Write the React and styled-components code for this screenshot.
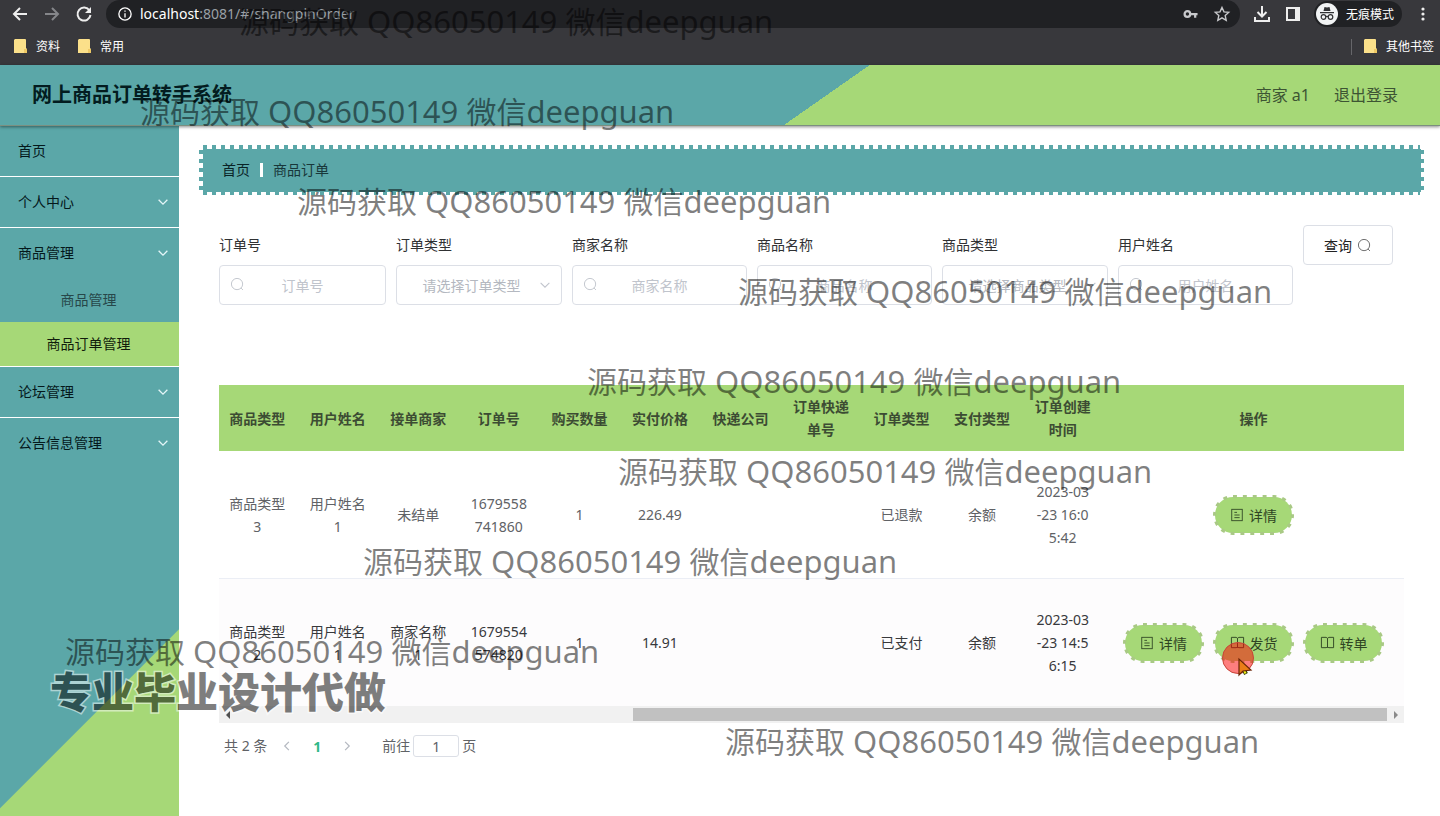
import React from "react";
import styled, { createGlobalStyle } from "styled-components";

const TEAL = "#5ba7a8";
const GREEN = "#a6d877";

const Global = createGlobalStyle`
  * { box-sizing: border-box; }
  body { margin: 0; background: #fff; }
  body, button, input, select { font-family: "Noto Sans", "Noto Sans CJK SC", sans-serif; font-size: 14px; }
  button { cursor: pointer; }
`;

const Page = styled.div`
  position: relative;
  min-height: 100vh;
  display: flex;
  flex-direction: column;
  overflow: hidden;
  line-height: 20px;
`;

/* ---------- browser frame ---------- */
const Browser = styled.div`
  background: #38383c;
  color: #fff;
  height: 65px;
  font-size: 12px;
`;
const Toolbar = styled.div`
  display: flex;
  align-items: center;
  height: 28px;
  padding: 0 8px 0 10px;
  gap: 12px;
`;
const IconButton = styled.button`
  display: flex;
  padding: 0;
  border: 0;
  background: none;
  color: ${(p) => p.$color || "#eee"};
`;
const Address = styled.div`
  flex: 1;
  display: flex;
  align-items: center;
  gap: 8px;
  height: 28px;
  padding: 0 8px 0 12px;
  border-radius: 14px;
  background: #202124;
`;
const Url = styled.span`
  flex: 1;
  font-size: 14px;
  color: #9aa0a6;
  b { font-weight: 400; color: #fff; }
`;
const AddressActions = styled.div`
  display: flex;
  align-items: center;
  gap: 14px;
`;
const Incognito = styled.button`
  display: flex;
  align-items: center;
  gap: 8px;
  height: 26px;
  padding: 0 8px 0 2px;
  border: 0;
  border-radius: 13px;
  background: #202124;
  color: #fff;
  font-size: 12px;
`;
const Bookmarks = styled.div`
  display: flex;
  align-items: center;
  height: 37px;
  padding: 0 6px 0 14px;
  gap: 18px;
`;
const Bookmark = styled.a`
  display: flex;
  align-items: center;
  gap: 9px;
  color: #fff;
  text-decoration: none;
`;
const Spacer = styled.div`flex: 1;`;
const Divider = styled.div`
  width: 1px;
  height: 16px;
  margin-right: -6px;
  background: #66666a;
`;

/* ---------- application ---------- */
const Header = styled.header`
  z-index: 1;
  display: flex;
  align-items: center;
  gap: 24px;
  height: 61px;
  padding: 0 42px 0 32px;
  border-bottom: 1px solid #7c8f80;
  background: linear-gradient(145deg, ${TEAL} 57%, ${GREEN} 57%);
  box-shadow: 0 1px 3px rgba(0, 0, 0, 0.45);
  color: #3d5433;
  font-size: 16px;
`;
const Title = styled.h1`
  flex: 1;
  margin: 0;
  color: #031c20;
  font-size: 20px;
  line-height: 24px;
`;
const HeaderLink = styled.a`
  color: inherit;
  text-decoration: none;
`;
const Body = styled.div`
  flex: 1;
  display: flex;
`;
const Sidebar = styled.nav`
  flex: none;
  width: 179px;
  background: linear-gradient(135deg, ${TEAL} 482px, ${GREEN} 483px);
`;
const MenuItem = styled.a`
  display: flex;
  align-items: center;
  justify-content: space-between;
  height: ${(p) => (p.$open || p.$last ? 50 : 51)}px;
  padding: 0 9px 0 18px;
  border-bottom: ${(p) => (p.$open || p.$last ? 0 : 1)}px solid #fff;
  color: #04181b;
  text-decoration: none;
  svg { color: #e4f6f8; }
`;
const SubMenu = styled.div`
  border-bottom: 1px solid #fff;
`;
const SubItem = styled.a`
  display: block;
  padding-right: 2px;
  line-height: 44px;
  text-align: center;
  color: ${(p) => (p.$active ? "#111c0b" : "#27474a")};
  background: ${(p) => (p.$active ? GREEN : "transparent")};
  text-decoration: none;
`;
const Main = styled.main`
  flex: 1;
  min-width: 0;
  padding: 19px 16px 20px 20px;
`;
const Breadcrumb = styled.div`
  display: flex;
  align-items: center;
  gap: 10px;
  height: 50px;
  padding: 0 23px;
  background:
    linear-gradient(${TEAL}, ${TEAL}) center / calc(100% - 7px) calc(100% - 7px) no-repeat,
    repeating-linear-gradient(90deg, ${TEAL} 0 4px, transparent 4px 9px) center / calc(100% - 8px) 100% no-repeat,
    repeating-linear-gradient(${TEAL} 0 4px, transparent 4px 9px) center / 100% calc(100% - 10px) no-repeat;
  color: #18373a;
`;
const Bar = styled.span`
  width: 3px;
  height: 14px;
  background: #fff;
`;
const Crumb = styled.a`
  color: #0a2326;
  text-decoration: none;
`;
const Panel = styled.div`padding: 30px 20px 0;`;
const Filters = styled.form`
  display: flex;
  gap: 10px;
  margin-bottom: 80px;
`;
const Field = styled.div`
  flex: 0 1 ${(p) => (p.$select ? 166 : 175)}px;
  &:first-child { flex-basis: 167px; }
`;
const Label = styled.label`
  display: block;
  line-height: 40px;
  color: #303133;
`;
const Control = styled.div`
  position: relative;
  display: flex;
  color: #c0c4cc;
`;
const LeftIcon = styled.span`
  position: absolute;
  left: 11px;
  top: 12px;
  display: flex;
`;
const RightIcon = styled.span`
  position: absolute;
  right: 10px;
  top: 13px;
  display: flex;
  pointer-events: none;
`;
const Input = styled.input`
  width: 100%;
  height: 40px;
  padding: 0 30px;
  border: 1px solid #dcdfe6;
  border-radius: 4px;
  background: #fff;
  text-align: center;
  &::placeholder { color: #c0c4cc; }
`;
const Select = styled.select`
  width: 100%;
  height: 40px;
  padding: 0 30px 0 15px;
  appearance: none;
  border: 1px solid #dcdfe6;
  border-radius: 4px;
  background: #fff;
  color: #b4b8c0;
  text-align: center;
  text-align-last: center;
`;
const Search = styled.button`
  display: flex;
  align-items: center;
  justify-content: center;
  gap: 5px;
  width: 90px;
  height: 40px;
  border: 1px solid #dcdfe6;
  border-radius: 4px;
  background: #fff;
  color: #222;
  svg { color: #666; }
`;
const TableScroll = styled.div`
  overflow: hidden;
`;
const Table = styled.table`
  width: calc(100% + 2px);
  margin-left: -2px;
  table-layout: fixed;
  border-collapse: separate;
  border-spacing: 0;
  line-height: 23px;
  text-align: center;
  color: #606266;
`;
const Th = styled.th`
  height: 66px;
  padding: 0 10px;
  background: ${GREEN};
  color: #3c4c33;
  ${(p) => p.$wide && "width: 301px;"}
`;
const Td = styled.td`
  height: ${(p) => (p.$dark ? 127 : 128)}px;
  padding: 0 12px;
  border-bottom: ${(p) => (p.$dark ? 0 : 1)}px solid #ebeef5;
  background: ${(p) => (p.$dark ? "#fdfcfd" : "#fff")};
  color: ${(p) => (p.$dark ? "#38393c" : "#606266")};
  word-break: break-all;
`;
const Actions = styled.div`
  display: flex;
  justify-content: center;
  gap: 9px;
`;
const Pill = styled.button`
  position: relative;
  display: flex;
  align-items: center;
  justify-content: center;
  gap: 5px;
  width: 81px;
  height: 40px;
  padding: 0;
  border: 2px solid transparent;
  border-radius: 20px;
  background: ${GREEN};
  background-clip: padding-box;
  color: #2f4523;
`;
const PillOutline = styled.svg`
  position: absolute;
  inset: -2px;
`;
const Scrollbar = styled.div`
  display: flex;
  align-items: center;
  height: 17px;
  background: #f1f1f1;
`;
const Arrow = styled.button`
  display: flex;
  align-items: center;
  justify-content: center;
  width: 17px;
  height: 17px;
  padding: 0;
  border: 0;
  background: none;
  color: ${(p) => p.$color};
`;
const Track = styled.div`
  flex: 1;
  display: flex;
  justify-content: flex-end;
`;
const Thumb = styled.div`
  width: 65.5%;
  height: 13px;
  background: #c1c1c1;
`;
const Pagination = styled.div`
  display: flex;
  align-items: center;
  height: 28px;
  margin-top: 9px;
  padding: 0 5px;
  color: #606266;
`;
const PageButton = styled.button`
  display: flex;
  justify-content: center;
  width: 30px;
  padding: 0;
  border: 0;
  background: none;
  color: ${(p) => (p.$current ? "#2fb888" : "#b4b8c0")};
  font-weight: 700;
`;
const Total = styled.span`margin-right: 5px;`;
const Jump = styled.label`
  display: flex;
  align-items: center;
  gap: 3px;
  margin-left: 20px;
`;
const JumpInput = styled.input`
  width: 46px;
  height: 22px;
  padding: 0;
  border: 1px solid #dcdfe6;
  border-radius: 3px;
  background: #fff;
  color: #606266;
  text-align: center;
`;

/* ---------- layers over the page ---------- */
const Overlay = styled.div`
  position: absolute;
  inset: 0;
  z-index: 5;
  pointer-events: none;
`;
const Mark = styled.span`
  position: absolute;
  left: ${(p) => p.$x}px;
  top: ${(p) => p.$y}px;
  font-size: 30px;
  line-height: 40px;
  white-space: nowrap;
  color: rgba(0, 0, 0, 0.5);
`;
const Latin = styled.span`
  font-size: 31px;
`;
const Slogan = styled.span`
  position: absolute;
  left: 50px;
  top: 662px;
  font-size: 42px;
  font-weight: 900;
  line-height: 60px;
  white-space: nowrap;
  color: #000;
  opacity: 0.5;
  paint-order: stroke fill;
  -webkit-text-stroke: 3px #fff;
`;
const Click = styled.svg`
  position: absolute;
  left: 1221px;
  top: 641px;
`;

const Svg = ({ size = 14, box = 16, sw = 1, children, fill = "none" }) => (
  <svg width={size} height={size} viewBox={`0 0 ${box} ${box}`} fill={fill} stroke={fill === "none" ? "currentColor" : "none"} strokeWidth={sw}>
    {children}
  </svg>
);
const SearchIcon = () => (
  <Svg size={15}><circle cx="7.5" cy="7.5" r="6" /><path d="M11.8 11.8l2 2" /></Svg>
);
const Chevron = ({ sw = 1.2 }) => <Svg sw={sw}><path d="M3 5.5l5 5 5-5" /></Svg>;
const DocIcon = () => (
  <Svg><rect x="2" y="1.5" width="12" height="13" /><path d="M5 5h3M5 8h6M5 11h6" /></Svg>
);
const BookIcon = () => (
  <Svg size={15}><path d="M8 3.5v10M8 3.5L6.500 2.500h-5v11h5L8 13l1.500.5h5v-11h-5z" /></Svg>
);
const Folder = () => (
  <svg width="13" height="15" viewBox="0 0 13 15">
    <path d="M1 0h10a1 1 0 0 1 1 1v8l1 1v4H0V1z" fill="#fbe08a" />
    <path d="M10 10h3v4h-3z" fill="#eec965" />
  </svg>
);

const menuTop = [["首页", false], ["个人中心", true]];
const menuBottom = ["论坛管理", "公告信息管理"];

const fields = [
  { id: "orderNo", label: "订单号" },
  { id: "orderType", label: "订单类型", select: true },
  { id: "shop", label: "商家名称" },
  { id: "goods", label: "商品名称" },
  { id: "goodsType", label: "商品类型", select: true },
  { id: "user", label: "用户姓名" },
];

const columns = ["商品类型", "用户姓名", "接单商家", "订单号", "购买数量", "实付价格", "快递公司", "订单快递单号", "订单类型", "支付类型", "订单创建时间"];

const rows = [
  {
    cells: ["商品类型3", "用户姓名1", "未结单", "1679558741860", "1", "226.49", "", "", "已退款", "余额", "2023-03-23 16:05:42"],
    actions: ["详情"],
  },
  {
    cells: ["商品类型2", "用户姓名1", "商家名称1", "1679554574820", "1", "14.91", "", "", "已支付", "余额", "2023-03-23 14:56:15"],
    actions: ["详情", "发货", "转单"],
  },
];

const marks = [[239, 1], [140, 91], [297, 181], [738, 271], [587, 361], [618, 451], [363, 541], [65, 631], [725, 721]];

function BrowserFrame() {
  return (
    <Browser>
      <Toolbar>
        <IconButton aria-label="后退"><Svg size={20} box={20} sw={2}><path d="M17 10H4M10 4l-6 6 6 6" /></Svg></IconButton>
        <IconButton aria-label="前进" $color="#85868a"><Svg size={20} box={20} sw={2}><path d="M3 10h13M10 4l6 6-6 6" /></Svg></IconButton>
        <IconButton aria-label="刷新">
          <Svg size={20} box={20} sw={2}><path d="M15.500 6.500A6.500 6.500 0 1 0 16.500 11" /><path d="M17 3v6h-6z" fill="currentColor" stroke="none" /></Svg>
        </IconButton>
        <Address>
          <Svg size={14} sw={1.5}><circle cx="8" cy="8" r="7" /><path d="M8 7v5M8 4v1.500" /></Svg>
          <Url><b>localhost</b>:8081/#/shangpinOrder</Url>
          <AddressActions>
            <IconButton aria-label="密码" $color="#c8c9cc">
              <Svg size={15} sw={2.4}><circle cx="4.700" cy="7.500" r="3" /><path d="M8 7.500h7.500M13 7.500v4" /></Svg>
            </IconButton>
            <IconButton aria-label="收藏" $color="#c8c9cc">
              <Svg size={20} box={20} sw={1.4}><path d="M10 3.500l2 4.400 4.700.5-3.500 3.200 1 4.700L10 13.900l-4.200 2.400 1-4.700-3.500-3.200 4.700-.5z" /></Svg>
            </IconButton>
          </AddressActions>
        </Address>
        <IconButton aria-label="下载"><Svg size={20} box={20} sw={2}><path d="M10 2v10M5.500 8l4.500 4.500L14.500 8M3 13v4h14v-4" /></Svg></IconButton>
        <IconButton aria-label="侧栏"><Svg size={18} box={18} sw={2}><rect x="3" y="3" width="12" height="12" /><path d="M13 3v12" strokeWidth="4" /></Svg></IconButton>
        <Incognito>
          <svg width="22" height="22" viewBox="0 0 22 22">
            <circle cx="11" cy="11" r="11" fill="#f1f3f4" />
            <path d="M7.500 8l1-4 2.500.6 2.500-.6 1 4zM4 9h14v1.300H4z" fill="#303134" />
            <g fill="none" stroke="#303134" strokeWidth="1.200"><circle cx="7.500" cy="14" r="2.300" /><circle cx="14.500" cy="14" r="2.300" /><path d="M9.800 13.600q1.200-.6 2.400 0" /></g>
          </svg>
          无痕模式
        </Incognito>
        <IconButton aria-label="菜单"><Svg size={18} box={18} fill="#eee"><circle cx="9" cy="4" r="1.600" /><circle cx="9" cy="9" r="1.600" /><circle cx="9" cy="14" r="1.600" /></Svg></IconButton>
      </Toolbar>
      <Bookmarks>
        <Bookmark href="#"><Folder />资料</Bookmark>
        <Bookmark href="#"><Folder />常用</Bookmark>
        <Spacer />
        <Divider />
        <Bookmark href="#"><Folder />其他书签</Bookmark>
      </Bookmarks>
    </Browser>
  );
}

function ActionButton({ children }) {
  return (
    <Pill>
      <PillOutline width="81" height="40" viewBox="0 0 81 40" fill="none" aria-hidden="true">
        <rect x="1.5" y="1.5" width="78" height="37" rx="18.5" pathLength="200" stroke="#a9c985" strokeWidth="3" strokeDasharray="4 6" />
      </PillOutline>
      {children === "详情" ? <DocIcon /> : <BookIcon />}
      {children}
    </Pill>
  );
}

export default function App() {
  return (
    <Page>
      <Global />
      <BrowserFrame />
      <Header>
        <Title>网上商品订单转手系统</Title>
        <span>商家 a1</span>
        <HeaderLink href="#">退出登录</HeaderLink>
      </Header>
      <Body>
        <Sidebar>
          {menuTop.map(([t, arrow]) => (
            <MenuItem href="#" key={t}>{t}{arrow && <Chevron sw={1.5} />}</MenuItem>
          ))}
          <MenuItem href="#" $open>商品管理<Chevron sw={1.5} /></MenuItem>
          <SubMenu>
            <SubItem href="#">商品管理</SubItem>
            <SubItem href="#" $active>商品订单管理</SubItem>
          </SubMenu>
          {menuBottom.map((t, i) => (
            <MenuItem href="#" key={t} $last={i === 1}>{t}<Chevron sw={1.5} /></MenuItem>
          ))}
        </Sidebar>
        <Main>
          <Breadcrumb>
            <Crumb href="#">首页</Crumb>
            <Bar />
            <span>商品订单</span>
          </Breadcrumb>
          <Panel>
            <Filters onSubmit={(e) => e.preventDefault()}>
              {fields.map((f) => (
                <Field key={f.id} $select={f.select}>
                  <Label htmlFor={f.id}>{f.label}</Label>
                  <Control>
                    {f.select ? (
                      <>
                        <Select id={f.id}><option>请选择{f.label}</option></Select>
                        <RightIcon><Chevron /></RightIcon>
                      </>
                    ) : (
                      <>
                        <Input id={f.id} placeholder={f.label} />
                        <LeftIcon><SearchIcon /></LeftIcon>
                      </>
                    )}
                  </Control>
                </Field>
              ))}
              <Search type="submit">查询<SearchIcon /></Search>
            </Filters>
            <TableScroll>
              <Table>
                <thead>
                  <tr>
                    {columns.map((c) => <Th key={c}>{c}</Th>)}
                    <Th $wide>操作</Th>
                  </tr>
                </thead>
                <tbody>
                  {rows.map((r, i) => (
                    <tr key={i}>
                      {r.cells.map((c, j) => <Td key={j} $dark={i === 1}>{c}</Td>)}
                      <Td $dark={i === 1}>
                        <Actions>
                          {r.actions.map((a) => <ActionButton key={a}>{a}</ActionButton>)}
                        </Actions>
                      </Td>
                    </tr>
                  ))}
                </tbody>
              </Table>
            </TableScroll>
            <Scrollbar>
              <Arrow aria-label="向左滚动" $color="#505050"><Svg size={8} box={8} fill="currentColor"><path d="M6 0v8L2 4z" /></Svg></Arrow>
              <Track><Thumb /></Track>
              <Arrow aria-label="向右滚动" $color="#8a8a8a"><Svg size={8} box={8} fill="currentColor"><path d="M2 0v8l4-4z" /></Svg></Arrow>
            </Scrollbar>
            <Pagination>
              <Total>共 2 条</Total>
              <PageButton aria-label="上一页"><Svg size={12} sw={1.6}><path d="M10.500 2.500L5 8l5.500 5.500" /></Svg></PageButton>
              <PageButton $current>1</PageButton>
              <PageButton aria-label="下一页"><Svg size={12} sw={1.6}><path d="M5.500 2.500L11 8l-5.500 5.500" /></Svg></PageButton>
              <Jump>前往<JumpInput defaultValue="1" />页</Jump>
            </Pagination>
          </Panel>
        </Main>
      </Body>
      <Overlay>
        {marks.map(([x, y]) => (
          <Mark key={y} $x={x} $y={y}>源码获取<Latin> QQ86050149 </Latin>微信<Latin>deepguan</Latin></Mark>
        ))}
        <Slogan>专业毕业设计代做</Slogan>
        <Click width="34" height="38" viewBox="0 0 34 38">
          <circle cx="17" cy="17" r="15.500" fill="rgba(255,0,0,.5)" stroke="#c8453a" strokeWidth="1" />
          <path d="M22 27l3 6" stroke="#2c3a00" strokeWidth="4" />
          <path d="M22.500 28l2 4.500" stroke="#f4ee1a" strokeWidth="2" />
          <path d="M18 18v16l4-4 8-1z" fill="#ea7d17" stroke="#6b2408" strokeWidth="1.200" />
        </Click>
      </Overlay>
    </Page>
  );
}
